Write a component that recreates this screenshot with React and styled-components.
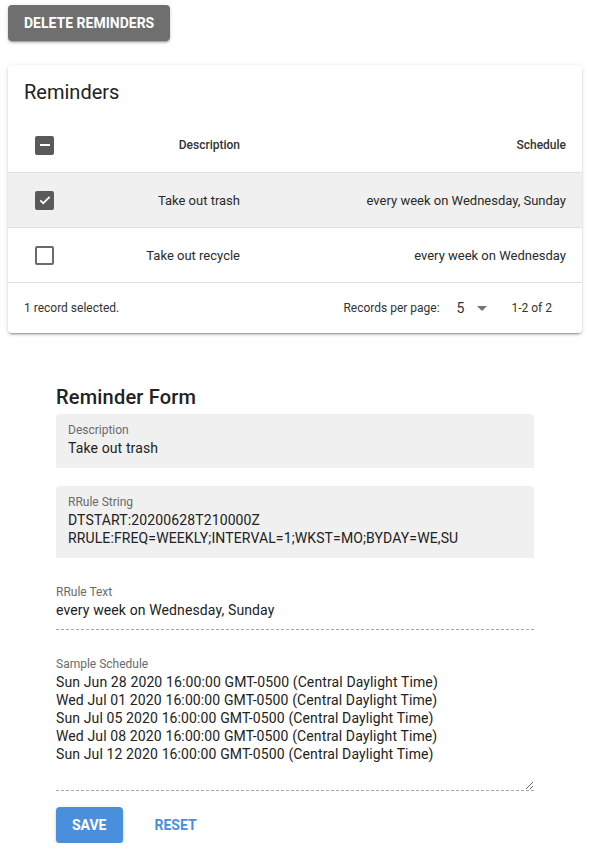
import styled, { createGlobalStyle } from "styled-components";

const GlobalStyle = createGlobalStyle`
  body {
    margin: 0;
    font-family: Roboto, "Liberation Sans", sans-serif;
    color: #222;
    background: #fff;
  }
`;

const Page = styled.div`
  padding: 5px 8px 0;
  width: 590px;
  box-sizing: border-box;
`;

const Button = styled.button`
  height: 36px;
  padding: 0 16px;
  border: none;
  border-radius: 4px;
  font-family: Roboto, "Liberation Sans", sans-serif;
  font-size: 14px;
  font-weight: 700;
  letter-spacing: 0;
  text-transform: uppercase;
  cursor: pointer;
  color: ${({ $text }) => (!$text ? "#fff" : $text)};
  background: ${({ $bg }) => $bg || "transparent"};
  box-shadow: ${({ $bg }) =>
    $bg
      ? "0 3px 1px -2px rgba(0,0,0,.2), 0 2px 2px 0 rgba(0,0,0,.14), 0 1px 5px 0 rgba(0,0,0,.12)"
      : "none"};
`;

const Card = styled.div`
  margin-top: 24px;
  border-radius: 4px;
  background: #fff;
  box-shadow: 0 3px 1px -2px rgba(0, 0, 0, 0.2), 0 2px 2px 0 rgba(0, 0, 0, 0.14),
    0 1px 5px 0 rgba(0, 0, 0, 0.12);
`;

const CardTitle = styled.div`
  height: 53px;
  display: flex;
  align-items: center;
  padding: 0 16px;
  font-size: 20px;
  color: #222;
`;

const Row = styled.div`
  display: grid;
  grid-template-columns: 60px 188px 1fr;
  height: 55px;
  align-items: center;
  border-bottom: 1px solid #dedede;
  box-sizing: border-box;
  background: ${({ $selected }) => ($selected ? "#f0f0f0" : "transparent")};
  font-size: ${({ $head }) => ($head ? "12px" : "13px")};
  font-weight: ${({ $head }) => ($head ? 500 : 400)};
  color: ${({ $head }) => ($head ? "#333" : "#2a2a2a")};
`;

const Cell = styled.div`
  text-align: right;
  padding-right: 16px;
  white-space: nowrap;
`;

const BoxCell = styled.div`
  padding-left: 27px;
  display: flex;
  align-items: center;
`;

const Box = styled.span`
  width: 19px;
  height: 19px;
  box-sizing: border-box;
  border-radius: 2px;
  display: inline-flex;
  align-items: center;
  justify-content: center;
  background: ${({ $on }) => ($on ? "#5a5a5a" : "#fff")};
  border: 2px solid ${({ $on }) => ($on ? "#5a5a5a" : "#6a6a6a")};
`;

const Footer = styled.div`
  height: 50px;
  display: flex;
  align-items: center;
  padding: 0 30px 0 16px;
  font-size: 12px;
  color: #333;
`;

const Pager = styled.div`
  margin-left: auto;
  display: flex;
  align-items: center;
`;

const PerPage = styled.div`
  display: flex;
  align-items: center;
  margin: 0 24px 0 17px;
  font-size: 14px;
  gap: 13px;
`;

const Caret = styled.span`
  width: 0;
  height: 0;
  border-left: 5px solid transparent;
  border-right: 5px solid transparent;
  border-top: 5px solid #757575;
`;

const Form = styled.form`
  margin: 52px 48px 0;
`;

const FormTitle = styled.h2`
  margin: 0 0 5px;
  font-size: 20px;
  font-weight: 500;
  line-height: 24px;
  letter-spacing: 0.2px;
  color: #222;
`;

const Field = styled.div`
  border-radius: ${({ $filled }) => ($filled ? "4px 4px 0 0" : "0")};
  background: ${({ $filled }) => ($filled ? "#f0f0f0" : "transparent")};
  padding: ${({ $filled }) => ($filled ? "8px 12px 11px" : "0 0 10px")};
  margin-bottom: ${({ $gap }) => $gap}px;
  border-bottom: ${({ $filled }) => ($filled ? "none" : "1px dashed #a8a8a8")};
`;

const Label = styled.div`
  font-size: 12px;
  line-height: 16px;
  color: #6b6b6b;
`;

const Value = styled.div`
  margin-top: 1px;
  font-size: 14px;
  line-height: 18px;
  letter-spacing: 0.12px;
  color: #222;
`;

const Area = styled.textarea`
  display: block;
  width: 100%;
  height: 117px;
  margin: 1px 0 -10px;
  padding: 0;
  border: none;
  outline: none;
  resize: vertical;
  font-family: Roboto, "Liberation Sans", sans-serif;
  font-size: 14px;
  line-height: 18px;
  letter-spacing: 0.12px;
  color: #222;
  background: transparent;
  box-sizing: border-box;
  overflow: hidden;
`;

const Actions = styled.div`
  display: flex;
  gap: 16px;
  margin-top: 16px;
`;

const reminders = [
  { id: 1, description: "Take out trash", schedule: "every week on Wednesday, Sunday", selected: true },
  { id: 2, description: "Take out recycle", schedule: "every week on Wednesday", selected: false },
];

const samples = [
  "Sun Jun 28 2020 16:00:00 GMT-0500 (Central Daylight Time)",
  "Wed Jul 01 2020 16:00:00 GMT-0500 (Central Daylight Time)",
  "Sun Jul 05 2020 16:00:00 GMT-0500 (Central Daylight Time)",
  "Wed Jul 08 2020 16:00:00 GMT-0500 (Central Daylight Time)",
  "Sun Jul 12 2020 16:00:00 GMT-0500 (Central Daylight Time)",
];

const Check = ({ state }) => (
  <Box $on={state !== "off"}>
    {state === "on" && (
      <svg width="14" height="14" viewBox="0 0 24 24">
        <path d="M4 12.5l5 5L20 6.5" fill="none" stroke="#fff" strokeWidth="3" />
      </svg>
    )}
    {state === "some" && <span style={{ width: 10, height: 2, background: "#fff" }} />}
  </Box>
);

export default function App() {
  return (
    <Page>
      <GlobalStyle />
      <Button $bg="#6f6f6f">Delete Reminders</Button>
      <Card>
        <CardTitle>Reminders</CardTitle>
        <Row $head>
          <BoxCell>
            <Check state="some" />
          </BoxCell>
          <Cell>Description</Cell>
          <Cell>Schedule</Cell>
        </Row>
        {reminders.map((r) => (
          <Row key={r.id} $selected={r.selected}>
            <BoxCell>
              <Check state={r.selected ? "on" : "off"} />
            </BoxCell>
            <Cell>{r.description}</Cell>
            <Cell>{r.schedule}</Cell>
          </Row>
        ))}
        <Footer>
          1 record selected.
          <Pager>
            Records per page:
            <PerPage>
              5 <Caret />
            </PerPage>
            1-2 of 2
          </Pager>
        </Footer>
      </Card>
      <Form onSubmit={(e) => e.preventDefault()}>
        <FormTitle>Reminder Form</FormTitle>
        <Field $filled $gap={18}>
          <Label>Description</Label>
          <Value>Take out trash</Value>
        </Field>
        <Field $filled $gap={26}>
          <Label>RRule String</Label>
          <Value>
            DTSTART:20200628T210000Z
            <br />
            RRULE:FREQ=WEEKLY;INTERVAL=1;WKST=MO;BYDAY=WE,SU
          </Value>
        </Field>
        <Field $gap={26}>
          <Label>RRule Text</Label>
          <Value>every week on Wednesday, Sunday</Value>
        </Field>
        <Field $gap={0}>
          <Label>Sample Schedule</Label>
          <Area readOnly value={samples.join("\n")} />
        </Field>
        <Actions>
          <Button type="submit" $bg="#4a8fdc">Save</Button>
          <Button type="button" $text="#4a8fdc">Reset</Button>
        </Actions>
      </Form>
    </Page>
  );
}
